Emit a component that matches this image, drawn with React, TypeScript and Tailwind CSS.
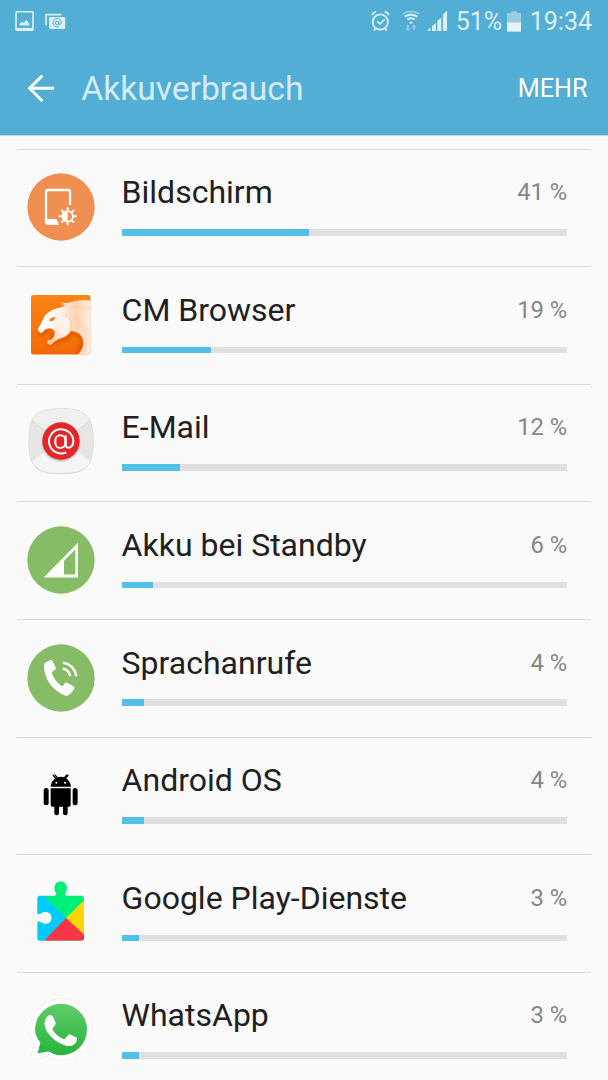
import React from 'react';

const ScreenIcon = () => (
    <svg viewBox="36 25 204 204" className="size-[68px]">
        <circle cx="138" cy="127" r="101" fill="#ef9052" />
        <path fill="none" stroke="#fff" strokeWidth="7" d="M165 121V82q0-6-6-6h-60q-6 0-6 6v88q0 6 6 6h30" />
        <path fill="#fff" d="M91 163h33l8 17H98q-7 0-7-7z" />
        <circle cx="158" cy="155" r="16" fill="none" stroke="#fff" strokeWidth="5" />
        <path fill="#fff" d="M158 138a17 17 0 0 0 0 34z" />
        <path
            fill="none"
            stroke="#fff"
            strokeWidth="6"
            d="M158 128v9M158 173v9M131 155h9M176 155h9M139 136l6 6M171 168l6 6M139 174l6-6M171 142l6-6"
        />
    </svg>
);

const BrowserIcon = () => (
    <svg viewBox="36 33 204 204" className="size-[68px]">
        <defs>
            <linearGradient id="cmBg" x1="0" y1="0" x2="0" y2="1">
                <stop offset="0" stopColor="#fb8412" />
                <stop offset="1" stopColor="#f26a08" />
            </linearGradient>
            <linearGradient id="cmHead" gradientUnits="userSpaceOnUse" x1="80" y1="130" x2="228" y2="130">
                <stop offset="0" stopColor="#fff" />
                <stop offset="0.4" stopColor="#fff0e4" />
                <stop offset="0.7" stopColor="#fdd3b2" />
                <stop offset="1" stopColor="#fff1e6" />
            </linearGradient>
            <linearGradient id="cmCheek" x1="0.7" y1="0" x2="0.2" y2="1">
                <stop offset="0" stopColor="#fff8f2" />
                <stop offset="0.5" stopColor="#ffeee0" />
                <stop offset="1" stopColor="#fbc49b" />
            </linearGradient>
            <clipPath id="cmClip">
                <rect x="48" y="45" width="179" height="179" rx="8" />
            </clipPath>
            <filter id="cmShadow" x="-20%" y="-20%" width="140%" height="140%">
                <feGaussianBlur stdDeviation="4" />
            </filter>
        </defs>
        <g clipPath="url(#cmClip)">
            <rect x="48" y="45" width="179" height="179" fill="url(#cmBg)" />
            <path
                fill="none"
                stroke="#cf4e02"
                strokeWidth="10"
                opacity=".6"
                filter="url(#cmShadow)"
                d="M72 158l8 6q14-16 28-8 12 8 0 22M102 198q20-14 36-16 26-6 34-24 26 4 28 28-2 22-16 38"
            />
            <path
                fill="url(#cmHead)"
                d="M68 148l8-14 11-22q7-14 29-24l26-8 8-3q-12-2-12-11 10 4 22 2 35-12 68-6v164h-42q22-19 19-44-5-26-37-30-10 18-36 24-14 6-26 19l-9-5q3-8 1-9l12-2q12-11 10-23-8-14-24-10-10 2-12 10l-8 4q-4-6-8-12z"
            />
            <path
                fill="url(#cmCheek)"
                d="M118 140q24-12 32-32 17 6 18 24 0 34-36 44-14 6-26 19l-9-5q3-8 1-9l12-2q14-12 8-39z"
            />
            <path fill="none" stroke="#f7a46a" strokeWidth="3" opacity=".5" d="M150 108q18 6 18 24 0 12-4 22" />
            <path
                fill="none"
                stroke="#fbc093"
                strokeWidth="6"
                opacity=".5"
                filter="url(#cmShadow)"
                d="M176 112q32 14 40 50 4 26-10 56M160 82q34-8 66 8"
            />
            <path fill="#ef7118" d="M102 120q8-9 20-10-4 12-16 14 0-4-4-4z" />
            <path fill="#f39a58" d="M139 67l7 4q4 7 10 7-13 1-17-11z" />
        </g>
    </svg>
);

const MailIcon = () => (
    <svg viewBox="36 26 204 204" className="size-[68px]">
        <defs>
            <clipPath id="mailClip">
                <path d="M138 29C209 29 234 48 234 126S209 221 138 221 42 204 42 126 67 29 138 29z" />
            </clipPath>
            <filter id="mailShadow" x="-20%" y="-20%" width="140%" height="140%">
                <feGaussianBlur stdDeviation="3" />
            </filter>
        </defs>
        <path fill="#dadad9" d="M138 27C211 27 236 47 236 126S211 225 138 225 40 206 40 126 65 27 138 27z" />
        <g clipPath="url(#mailClip)">
            <rect x="36" y="26" width="204" height="204" fill="#e6e6e5" />
            <path fill="#f0f0ef" d="M36 50L138 136 240 50V20H36z" />
            <path fill="#f5f5f5" d="M40 198l98-80 98 80v40H40z" />
            <path fill="none" stroke="#c8c8c6" strokeWidth="2" d="M40 55l98 78 98-78" />
            <path fill="none" stroke="#fcfcfc" strokeWidth="2" d="M44 194l94-74 94 74" />
        </g>
        <circle cx="138" cy="130" r="55" fill="#777" opacity=".6" filter="url(#mailShadow)" />
        <circle cx="138" cy="125" r="56" fill="#e4262a" />
        <g fill="none" stroke="#fff" strokeWidth="6">
            <rect x="121" y="108" width="30" height="38" rx="15" />
            <path d="M152 108v28q0 10 10 9 13-3 13-20a36.500 36.500 0 1 0-21 34" />
        </g>
    </svg>
);

const StandbyIcon = () => (
    <svg viewBox="36 33.500 204 204" className="size-[68px]">
        <circle cx="138" cy="135.500" r="101" fill="#87bc67" />
        <path fill="#fff" fillRule="evenodd" d="M189 84v104H86zM181 104l-34 34v41h34z" />
    </svg>
);

const CallIcon = () => (
    <svg viewBox="36 26.500 204 204" className="size-[68px]">
        <circle cx="138" cy="128.500" r="101" fill="#87bc67" />
        <path
            fill="#fff"
            d="M90 83l15-8q5-3 8 3l9 18q3 5-2 8l-8 6q-2 2-1 5 8 23 28 37 3 2 5 0l5-7q3-4 7-2l19 10q6 3 3 8-8 14-18 19-5 3-10 1-52-22-62-76-3-16 2-22z"
        />
        <path fill="none" stroke="#fff" strokeWidth="7.500" d="M143 100q18 3 23 23M144 83q33 5 40 40" />
    </svg>
);

const AndroidIcon = () => (
    <svg viewBox="36 19 204 204" className="size-[68px]">
        <path d="M107 96q2-20 18-27l-8-9 3-1 9 9q9-3 18 0l8-9 3 2-7 9q15 8 17 26z" />
        <path d="M107 101h60v50q0 5-5 5h-4v20q0 6-7 6t-7-6v-20h-12v20q0 6-7 6t-7-6v-20h-6q-5 0-5-5z" />
        <rect x="86" y="100" width="15" height="52" rx="7.500" />
        <rect x="173" y="100" width="15" height="52" rx="7.500" />
        <circle cx="124" cy="84" r="3" fill="#fafafa" />
        <circle cx="150" cy="84" r="3" fill="#fafafa" />
        <path fill="none" stroke="#000" strokeWidth="4" strokeLinecap="round" d="M115 62l7 9M159 62l-7 9" />
    </svg>
);

const PlayIcon = () => (
    <svg viewBox="36 27 204 204" className="size-[68px]">
        <defs>
            <clipPath id="playClip">
                <path d="M75 77h43q6 0 6-6-6-8-6-18a19 19 0 0 1 38 0q0 10-6 18 0 6 6 6h43q8 0 8 8v119q0 8-8 8H75q-8 0-8-8v-49h9q5 7 16 7a18.500 18.500 0 0 0 0-37q-11 0-16 7h-9V85q0-8 8-8z" />
            </clipPath>
        </defs>
        <g clipPath="url(#playClip)">
            <rect x="60" y="30" width="150" height="185" fill="#00ef76" />
            <path fill="#00cbff" d="M60 77h26l67 67-67 70H60z" />
            <path fill="#ffd504" d="M210 88l-57 56 57 56z" />
            <path fill="#f93647" d="M153 144l-68 70h130v-13z" />
        </g>
    </svg>
);

const WhatsAppIcon = () => (
    <svg viewBox="36 19.500 204 204" className="size-[68px]">
        <defs>
            <linearGradient id="waBg" x1="0" y1="0" x2="0" y2="1">
                <stop offset="0" stopColor="#60cd68" />
                <stop offset="1" stopColor="#27b43e" />
            </linearGradient>
            <filter id="waShadow" x="-10%" y="-10%" width="120%" height="120%">
                <feDropShadow dx="0" dy="0" stdDeviation="2" floodColor="#000" floodOpacity=".45" />
            </filter>
        </defs>
        <path
            filter="url(#waShadow)"
            fill="#fff"
            d="M45 212l13-46q-13-22-13-45a94 92 0 1 1 94 91q-25 0-45-12z"
        />
        <path fill="url(#waBg)" d="M68 191l8-32q-16-20-16-40a78 77 0 1 1 78 78q-20 0-37-11z" />
        <path
            fill="#fff"
            d="M97 80q5-4 12-2 3 0 5 4l8 18q1 3-1 6l-7 9q-3 3-1 6 11 19 31 27 4 2 6-1l9-10q3-4 7-2l18 9q3 2 2 6-2 13-13 17-11 5-24 0-32-9-54-42-14-26 2-45z"
        />
    </svg>
);

const apps = [
    { name: 'Bildschirm', percent: 41, icon: <ScreenIcon /> },
    { name: 'CM Browser', percent: 19, icon: <BrowserIcon /> },
    { name: 'E-Mail', percent: 12, icon: <MailIcon /> },
    { name: 'Akku bei Standby', percent: 6, icon: <StandbyIcon /> },
    { name: 'Sprachanrufe', percent: 4, icon: <CallIcon /> },
    { name: 'Android OS', percent: 4, icon: <AndroidIcon /> },
    { name: 'Google Play-Dienste', percent: 3, icon: <PlayIcon /> },
    { name: 'WhatsApp', percent: 3, icon: <WhatsAppIcon /> },
];

const StatusBar = () => (
    <div className="flex h-[42px] items-center justify-between pl-[15px] pr-[16px] text-[25px] text-[#dceef6]">
        {/* Notifications */}
        <div className="flex items-center gap-[11px]">
            <svg viewBox="46 30 57 62" className="h-[20.600px] w-[19px]">
                <rect x="49" y="32" width="51" height="57" rx="4" fill="none" stroke="currentColor" strokeWidth="5" />
                <path fill="currentColor" d="M50 81h50v7H50zM59 74v-5l8-7 5 4 8-10 9 12v6z" />
            </svg>
            <svg viewBox="135 36 62 50" className="h-[16.600px] w-[20.600px]">
                <path fill="none" stroke="currentColor" strokeWidth="5" d="M138 73V41h46" />
                <rect x="147" y="48" width="49" height="36" rx="4" fill="currentColor" />
                <g fill="none" stroke="#52aed5" strokeWidth="3">
                    <circle cx="171" cy="66" r="5" />
                    <path d="M177 60l-1 10q8 2 8-5a12.500 12.500 0 1 0-6 11" />
                </g>
            </svg>
        </div>

        {/* System state */}
        <div className="flex items-center">
            <svg viewBox="33 27 58 65" className="h-[21.600px] w-[19.300px]" fill="none" stroke="currentColor">
                <circle cx="61" cy="63" r="23" strokeWidth="5.500" />
                <path strokeWidth="5" d="M36 42q4-8 12-10M74 32q8 2 13 10M46 83l-4 7M76 83l4 7M51 61l9 8 14-14" />
            </svg>
            <svg viewBox="125 27 54 66" className="ml-[11.500px] h-[22px] w-[18px]" fill="none" stroke="currentColor">
                <path opacity=".45" strokeWidth="5" d="M127 39q25-14 50 0" />
                <path strokeWidth="6" d="M133 47q19-12 38 0M141 56q11-8 22 0" />
                <path fill="currentColor" stroke="none" d="M146 64q6-4 12 0l-6 6z" />
                <path fill="currentColor" stroke="none" opacity=".45" d="M140 71h6v11h5l-8 9-8-9h5zM158 88h6V79h5l-8-9-8 9h5z" />
            </svg>
            <svg viewBox="200 28 62 64" className="ml-[7px] h-[21.300px] w-[20.600px]" fill="currentColor">
                <path d="M200 91l10-10v10zM215 76l12-8v23h-12zM231 60l12-9v40h-12zM248 42l13-13v62h-13z" />
            </svg>
            <span className="ml-[8.400px] pt-[1.500px] leading-[30px]">51%</span>
            <svg viewBox="441 29 42 63" className="ml-[5px] h-[21px] w-[14px]" fill="currentColor">
                <path opacity=".5" d="M441 35h12v-5h18v5h12v28h-42z" />
                <path fill="#e8f4f9" d="M441 63h42v28h-42z" />
            </svg>
            <span className="ml-[8.600px] pt-[1.500px] leading-[30px]">19:34</span>
        </div>
    </div>
);

const AppRow = ({ name, percent, icon }: { name: string; percent: number; icon: React.ReactNode }) => (
    <div className="flex h-[117.600px] shrink-0 border-t border-[#d9d9d9] pl-[10px] pr-[23.700px]">
        <div className="w-[94.600px] shrink-0 pt-[23.700px]">{icon}</div>
        <div className="flex-1 pt-[22.700px]">
            <div className="flex items-start justify-between">
                <span className="text-[32px] leading-[40px] text-[#202020]">{name}</span>
                <span className="pt-[6px] text-[23.800px] leading-[28px] text-[#868686]">{percent} %</span>
            </div>
            <div className="mt-[16.800px] h-[6.500px] bg-[#e0e0df]">
                {/* The fill always runs one point ahead of the rounded number */}
                <div className="h-full bg-[#54bfe6]" style={{ width: `${percent + 1}%` }} />
            </div>
        </div>
    </div>
);

export default function App() {
    return (
        <div className="flex h-[1080px] w-[608px] flex-col overflow-hidden bg-[#fafafa] font-['Roboto',sans-serif]">
            <header className="h-[135px] shrink-0 bg-[#52aed5] shadow-[0_1px_1px_#cfd6d9]">
                <StatusBar />
                <div className="flex h-[93px] items-center pl-[26.500px] pr-[20.500px]">
                    <svg viewBox="80 222 82 82" className="size-[27.300px]" fill="none" stroke="#fff" strokeWidth="9">
                        <path d="M162 262H87M126 224l-38 38 38 38" />
                    </svg>
                    <h1 className="ml-[27.500px] flex-1 pt-[1px] text-[33.600px] leading-[40px] text-[#d5ebf5]">
                        Akkuverbrauch
                    </h1>
                    <button className="pt-[1.500px] text-[25.200px] leading-[30px] text-white">MEHR</button>
                </div>
            </header>

            <main className="flex-1 overflow-hidden px-[17px] pt-[13.600px]">
                {apps.map((app) => (
                    <AppRow key={app.name} {...app} />
                ))}
            </main>
        </div>
    );
}
